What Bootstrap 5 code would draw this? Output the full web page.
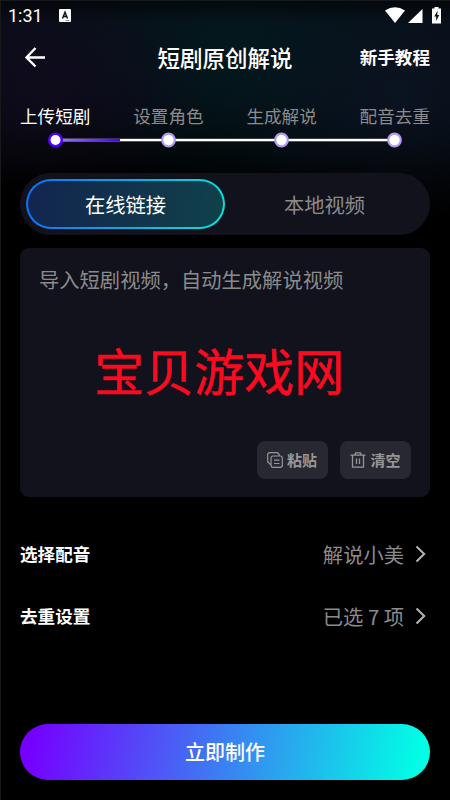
<!DOCTYPE html>
<html lang="zh-CN">
<head>
    <meta charset="UTF-8">
    <meta name="viewport" content="width=device-width, initial-scale=1.0">
    <title>短剧原创解说</title>
    <link href="https://cdn.jsdelivr.net/npm/bootstrap@5.3.3/dist/css/bootstrap.min.css" rel="stylesheet">
    <script src="https://cdn.jsdelivr.net/npm/bootstrap@5.3.3/dist/js/bootstrap.bundle.min.js"></script>
    <style>
        body {
            font-family: "Noto Sans CJK SC", sans-serif;
            background: #000;
            color: #fff;
            line-height: 1;
        }
        .pantalla {
            height: 800px;
            background:
                linear-gradient(90deg, #17191b 0 1px, transparent 1px),
                linear-gradient(180deg, #15191b 0 1px, rgba(0, 0, 0, .5) 1px, transparent 24px),
                radial-gradient(ellipse 170px 110px at 45px 85px, #0f0b1c, transparent),
                radial-gradient(ellipse 190px 125px at 400px 95px, #0a1320, transparent),
                radial-gradient(ellipse 200px 145px at 240px 50px, #02191d, transparent),
                linear-gradient(180deg, #080e17 0, #080e17 70px, #000 180px);
        }
        .contenido {
            padding: 0 20px 20px;
        }
        .estado {
            height: 32px;
            padding: 0 8px;
        }
        .hora {
            font: 18px/32px Roboto, sans-serif;
        }
        .aviso {
            margin: -2px 0 0 16px;
        }
        .cabecera {
            height: 52px;
            padding-bottom: 2px;
        }
        .titulo {
            font-size: 22.5px;
            font-weight: 500;
        }
        .texto-176 {
            font-size: 17.6px;
        }
        .medio {
            font-weight: 500;
        }
        .texto-203 {
            font-size: 20.3px;
        }
        .gris {
            color: #8b8b8b;
        }
        .pasos {
            padding-top: 23px;
            height: 88.5px;
        }
        .pasos svg {
            margin-top: 5px;
        }
        .pestanas {
            height: 62.5px;
            padding: 6px;
            background: #12121d;
        }
        .activa {
            border: 2px solid transparent;
            background:
                linear-gradient(100deg, #12254f, #10414a) padding-box,
                linear-gradient(100deg, #0b70fa, #08e4d7) border-box;
        }
        .caja {
            height: 249.5px;
            margin-top: 12.5px;
            padding: 21.5px 19px 18px;
            background: #12121d;
            border-radius: 9px;
        }
        .marca {
            font-size: 50px;
            color: #fe0a20;
            -webkit-text-stroke: .6px #fe0a20;
            padding: 8px 11px 0 0;
        }
        .accion {
            width: 71px;
            height: 38px;
            padding: 0;
            background: #282832;
            color: #969696;
            border-radius: 8px;
            font-size: 15px;
            font-weight: 700;
        }
        .acciones {
            gap: 12.5px;
        }
        .ajustes {
            margin-top: 25.5px;
        }
        .fila {
            height: 62.5px;
        }
        .flecha {
            margin: 0 4px 0 11px;
        }
        .crear {
            height: 56px;
            font-size: 20px;
            font-weight: 500;
            background: linear-gradient(100deg, #7500ff 3%, #00ffe5 97%);
        }
    </style>
</head>
<body>
    <div class="pantalla d-flex flex-column overflow-hidden">
        <!-- Barra de estado -->
        <div class="estado d-flex align-items-center">
            <span class="hora">1:31</span>
            <svg class="aviso" width="12" height="13" viewBox="0 0 12 13">
                <rect width="12" height="13" rx="1" fill="#fff"/>
                <path d="M3.5 9.5 6 3.2 8.5 9.5M4.5 7.4h3" fill="none" stroke="#10151c" stroke-width="1.5"/>
                <path d="M6.5 11.5h4" stroke="#888"/>
            </svg>
            <svg class="ms-auto" width="57" height="18" viewBox="0 0 57 18" fill="#fff">
                <path d="M0 3.5Q10 -3 20 3.5L10 16Z"/>
                <path d="M37.5 2V16H23Z"/>
                <path d="M49.5 0h4v1.5h2.5v15h-9v-15h2.5z"/>
                <path d="M52.7 3.5 49.2 9.5h2v4.500l3-6h-2z" fill="#0a0e15"/>
            </svg>
        </div>

        <div class="contenido flex-grow-1 d-flex flex-column">
            <!-- Encabezado -->
            <div class="cabecera row g-0 align-items-center">
                <div class="col">
                    <svg class="d-block" width="30" height="24" viewBox="0 0 30 24" fill="none" stroke="#fff" stroke-width="2.4">
                        <path d="M15.5 3 6.500 12.500l9 9M6.500 12.500h18.500"/>
                    </svg>
                </div>
                <div class="col-auto titulo">短剧原创解说</div>
                <div class="col text-end texto-176 fw-bold">新手教程</div>
            </div>

            <!-- Pasos -->
            <div class="pasos">
                <div class="d-flex justify-content-between texto-176 gris">
                    <span class="text-white">上传短剧</span>
                    <span>设置角色</span>
                    <span>生成解说</span>
                    <span>配音去重</span>
                </div>
                <svg class="d-block" width="410" height="20" viewBox="0 0 410 20">
                    <defs>
                        <linearGradient id="tramo"><stop stop-color="#a283f5"/><stop offset="1" stop-color="#4a00f0"/></linearGradient>
                    </defs>
                    <rect x="35" y="8.800" width="340" height="2.500" fill="#fff"/>
                    <rect x="35" y="8.800" width="65" height="2.500" fill="url(#tramo)"/>
                    <g fill="#fff" stroke="#b299f5" stroke-width="2.2">
                        <circle cx="35.500" cy="10" r="6.300" stroke="#5100f5" stroke-width="2.6"/>
                        <circle cx="148.500" cy="10" r="6.300"/>
                        <circle cx="261.500" cy="10" r="6.300"/>
                        <circle cx="374.500" cy="10" r="6.300"/>
                    </g>
                </svg>
            </div>

            <!-- Pestañas -->
            <div class="pestanas d-flex rounded-pill texto-203">
                <div class="activa w-50 rounded-pill d-flex align-items-center justify-content-center">在线链接</div>
                <div class="w-50 gris d-flex align-items-center justify-content-center">本地视频</div>
            </div>

            <!-- Enlace del video -->
            <div class="caja d-flex flex-column">
                <div class="texto-203 gris">导入短剧视频，自动生成解说视频</div>
                <div class="marca flex-grow-1 d-flex align-items-center justify-content-center text-nowrap">宝贝游戏网</div>
                <div class="acciones d-flex justify-content-end">
                    <button class="accion btn d-flex align-items-center justify-content-center">
                        <svg class="me-1" width="16" height="16" viewBox="0 0 16 16" fill="none" stroke="#969696" stroke-width="1.2">
                            <rect x="4" y="4" width="11.3" height="11.3" rx="2"/>
                            <path d="M4 12.5H3.5L.7 10V3Q.7.7 3 .7H9.5Q12 .7 12.5 4M7 8.2h5.5M7 11.5h5.5"/>
                        </svg>
                        粘贴
                    </button>
                    <button class="accion btn d-flex align-items-center justify-content-center">
                        <svg class="me-1" width="16" height="16" viewBox="0 0 16 16" fill="none" stroke="#969696" stroke-width="1.3">
                            <path d="M.5 3.2h15M2.5 3.2V15.2h11V3.2M5 3.2 5.500.8h5L11 3.2M6.500 6.500v5.500M9.500 6.500v5.500"/>
                        </svg>
                        清空
                    </button>
                </div>
            </div>

            <!-- Ajustes -->
            <div class="ajustes">
                <div class="fila d-flex align-items-center justify-content-between">
                    <span class="texto-176 fw-bold">选择配音</span>
                    <span class="d-flex align-items-center texto-203 gris">解说小美
                        <svg class="flecha" width="11" height="18" viewBox="0 0 11 18" fill="none" stroke="#b5b5b5" stroke-width="2"><path d="M1.5 1.5 9.2 9 1.5 16.5"/></svg>
                    </span>
                </div>
                <div class="fila d-flex align-items-center justify-content-between">
                    <span class="texto-176 fw-bold">去重设置</span>
                    <span class="d-flex align-items-center texto-203 gris">已选 7 项
                        <svg class="flecha" width="11" height="18" viewBox="0 0 11 18" fill="none" stroke="#b5b5b5" stroke-width="2"><path d="M1.5 1.5 9.2 9 1.5 16.5"/></svg>
                    </span>
                </div>
            </div>

            <button class="crear btn rounded-pill border-0 text-white w-100 mt-auto p-0">立即制作</button>
        </div>
    </div>
</body>
</html>
